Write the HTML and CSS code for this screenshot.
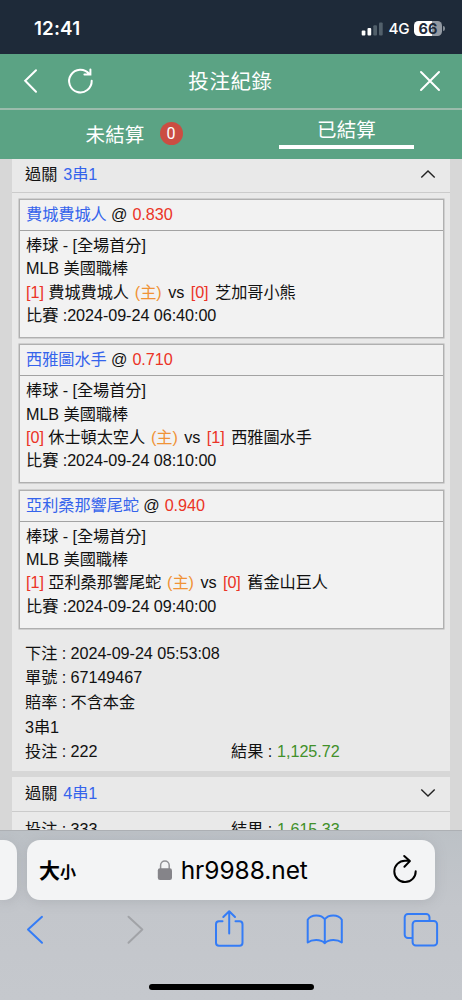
FILE: index.html
```html
<!DOCTYPE html>
<html lang="zh-Hant">
<head>
<meta charset="utf-8">
<title>投注紀錄</title>
<link rel="stylesheet" href="styles.css">
</head>
<body>
<div class="phone">
  <div class="status">
    <span class="clock">12:41</span>
    <div class="signals">
      <svg class="bars" width="23" height="14" viewBox="0 0 23 14"><g fill="#fff"><rect x="0.7" y="8.6" width="3.7" height="5" rx="1"/><rect x="6.5" y="6.1" width="3.7" height="7.5" rx="1"/></g><g fill="#52606b"><rect x="12.3" y="3.2" width="3.7" height="10.4" rx="1"/><rect x="18" y="0.5" width="3.7" height="13.1" rx="1"/></g></svg>
      <span class="net">4G</span>
      <span class="battery">66</span>
      <span class="nub"></span>
    </div>
  </div>
  <header class="titlebar">
    <div class="left">
      <svg width="16" height="26" viewBox="0 0 16 26"><path d="M14 2.2 3.2 12.8 14 23.7" class="wline"/></svg>
      <svg width="28" height="28" viewBox="0 0 28 28"><path d="M25.7 13.8A11.3 11.3 0 1 1 23.2 7M24.4 2.5V7.5H18.4" class="wline"/></svg>
    </div>
    <h1>投注紀錄</h1>
    <svg class="close" width="24" height="24" viewBox="0 0 24 24"><path d="M3 3 21 21M21 3 3 21" class="wline"/></svg>
  </header>
  <nav class="tabs">
    <div class="tab">未結算<span class="count">0</span></div>
    <div class="tab active"><span>已結算</span></div>
  </nav>
  <main class="content">
    <section class="panel first">
      <div class="fold">過關 <b>3串1</b><svg width="18" height="10" viewBox="0 0 18 10"><path d="M2.3 8.4 9 1.9 15.7 8.4"/></svg></div>
      <div class="cards">
        <article class="card">
          <div class="pick"><b>費城費城人</b> @ <i>0.830</i></div>
          <div class="match"><p>棒球 - [全場首分]</p><p>MLB 美國職棒</p><p><i>[1]</i> 費城費城人 <em>(主)</em><span class="vs">vs</span><i>[0]</i><span class="away">芝加哥小熊</span></p><p>比賽 :2024-09-24 06:40:00</p></div>
        </article>
        <article class="card">
          <div class="pick"><b>西雅圖水手</b> @ <i>0.710</i></div>
          <div class="match"><p>棒球 - [全場首分]</p><p>MLB 美國職棒</p><p><i>[0]</i> 休士頓太空人 <em>(主)</em><span class="vs">vs</span><i>[1]</i><span class="away">西雅圖水手</span></p><p>比賽 :2024-09-24 08:10:00</p></div>
        </article>
        <article class="card">
          <div class="pick"><b>亞利桑那響尾蛇</b> @ <i>0.940</i></div>
          <div class="match"><p>棒球 - [全場首分]</p><p>MLB 美國職棒</p><p><i>[1]</i> 亞利桑那響尾蛇 <em>(主)</em><span class="vs">vs</span><i>[0]</i><span class="away">舊金山巨人</span></p><p>比賽 :2024-09-24 09:40:00</p></div>
        </article>
      </div>
      <div class="info">
        <p>下注 : 2024-09-24 05:53:08</p>
        <p>單號 : 67149467</p>
        <p>賠率 : 不含本金</p>
        <p>3串1</p>
        <div class="sum"><p>投注 : 222</p><p>結果 : <u>1,125.72</u></p></div>
      </div>
    </section>
    <section class="panel second">
      <div class="fold">過關 <b>4串1</b><svg width="18" height="10" viewBox="0 0 18 10"><path d="M2.3 1.6 9 8.1 15.7 1.6"/></svg></div>
      <div class="info"><div class="sum"><p>投注 : 333</p><p>結果 : <u>1,615.33</u></p></div></div>
    </section>
  </main>
  <footer class="browser">
    <div class="row">
      <div class="prev"></div>
      <div class="address">
        <span class="size">大<small>小</small></span>
        <div class="host"><svg width="16" height="22" viewBox="0 0 16 22"><path d="M3.6 10V6.2a4.3 4.3 0 0 1 8.6 0V10" fill="none" stroke="#929296" stroke-width="1.5"/><rect x="0.8" y="9.3" width="14.2" height="11.7" rx="2.2" fill="#858489"/></svg><span>hr9988.net</span></div>
        <svg class="reload" width="26" height="32" viewBox="0 0 26 32"><path d="M23.7 17.2A10.7 10.7 0 1 1 13 6.7H17.6M12.2 2 17.9 7.1 12.4 12.8" fill="none" stroke="#000" stroke-width="2" stroke-linecap="round" stroke-linejoin="round"/></svg>
      </div>
    </div>
    <div class="tools">
      <svg width="462" height="50" viewBox="0 0 462 50">
        <g fill="none" stroke="#347cf6" stroke-width="2" stroke-linecap="round" stroke-linejoin="round">
          <path d="M42 12.8 28 25.5 42 38.8"/>
          <path d="M128.5 12.8 142.3 25.5 128.5 38.8" stroke="#a1a3a7"/>
          <path d="M222.5 17.3H219a3 3 0 0 0-3 3V38.7a3 3 0 0 0 3 3H239.5a3 3 0 0 0 3-3V20.3a3 3 0 0 0-3-3H235.5M229.2 29.5V7.5M223.3 13 229.2 7.2 235 13"/>
          <path d="M324.8 39.2V15.3C321.3 10.3 311.2 10 307.7 15.7V38.5C311.5 35.5 320.5 34.6 324.8 39.2 329 34.6 338 35.5 341.8 38.5V15.7C338.3 10 328.3 10.3 324.8 15.3"/>
          <path d="M412 34H408a3.3 3.3 0 0 1-3.3-3.3V13.3A3.3 3.3 0 0 1 408 10H426.2a3.3 3.3 0 0 1 3.3 3.3V17"/>
          <rect x="412.6" y="17.1" width="24.5" height="24.5" rx="3.3"/>
        </g>
      </svg>
    </div>
    <div class="home"></div>
  </footer>
</div>
</body>
</html>
```
FILE: styles.css
```css
* { box-sizing: border-box; }
body { margin: 0; font-family: "Liberation Sans", "Noto Sans CJK TC", sans-serif; color: #111; }
p, h1 { margin: 0; }
b, i, em, u { font-weight: normal; font-style: normal; text-decoration: none; }
b { color: #3564ec; }
i { color: #eb3427; }
em { color: #f09336; margin-left: 1.5px; }
u { color: #42902a; margin-left: 0.5px; }
svg { display: block; flex: none; }
.phone { width: 462px; height: 1000px; overflow: hidden; display: flex; flex-direction: column; background: #d7d7d7; }

.status { flex: none; height: 54px; background: #1e2a39; color: #fff; display: flex; justify-content: space-between; align-items: center; padding: 3px 18px 0 34px; font-family: Inter, sans-serif; }
.clock { font-size: 18.8px; font-weight: 600; letter-spacing: 0.15px; }
.signals { display: flex; align-items: center; }
.net { font-size: 15.2px; font-weight: 500; margin-left: 5px; width: 25.5px; letter-spacing: -0.3px; }
.battery { width: 28px; height: 15px; border-radius: 4.5px; background: linear-gradient(90deg, #fff 66%, #9299a2 66%); color: #1e2a39; font-size: 14.5px; line-height: 15px; font-weight: 700; text-align: center; }
.nub { width: 2px; height: 5px; background: #858d96; border-radius: 0 2px 2px 0; margin-left: 1px; margin-right: -1px; }

.titlebar { flex: none; height: 56px; background: #5ba384; border-bottom: 2px solid #9bbcac; display: grid; grid-template-columns: 1fr auto 1fr; align-items: center; padding: 0 20px 0 22px; color: #fff; }
.left { display: flex; align-items: center; gap: 28px; }
.titlebar h1 { font-size: 20.5px; font-weight: 400; letter-spacing: 0.6px; line-height: 30px; margin-left: -3px; padding-top: 1px; }
.close { justify-self: end; }
.wline { fill: none; stroke: #fff; stroke-width: 2; stroke-linecap: round; stroke-linejoin: miter; }
.tabs { flex: none; height: 49px; background: #5ba384; color: #fff; display: grid; grid-template-columns: 1fr 1fr; font-size: 19.5px; }
.tab { display: flex; justify-content: center; align-items: center; padding: 0 0 2px 37px; letter-spacing: 0.2px; }
.count { width: 23px; height: 23px; border-radius: 50%; background: #cb4d42; font-family: Roboto, sans-serif; font-size: 16px; line-height: 23px; text-align: center; margin-left: 15px; }
.tab.active { padding: 5px 0 0; align-items: flex-start; }
.active span { width: 134.5px; height: 34px; border-bottom: 4px solid #fff; line-height: 30px; text-align: center; }

.content { flex: none; height: 671px; overflow: hidden; padding: 0 12px; font-size: 16.2px; letter-spacing: -0.06px; }
.panel { background: #e9e9e9; }
.fold { height: 35.5px; line-height: 33px; border-bottom: 1px solid #cbcbcb; padding: 0 13px 1px; display: flex; align-items: center; white-space: pre; }
.fold b { margin-left: 1.5px; }
.fold svg { margin-left: auto; fill: none; stroke: #222; stroke-width: 1.4; }
.first .fold { height: 33.5px; line-height: 30px; padding-bottom: 3px; }
.first { height: 611.5px; }
.second { margin-top: 6px; height: 80px; }
.cards { padding: 6.3px 6.5px 0; display: flex; flex-direction: column; gap: 6.1px; }
.card { height: 139.3px; background: #f2f2f2; border: 1.5px solid #b0b0b0; box-shadow: 0 0 0 0.5px #b5b5b5; }
.pick { height: 31px; line-height: 29px; border-bottom: 1px solid #a3a3a3; padding-left: 6.5px; white-space: pre; }
.pick i { margin-left: 0.5px; }
.match { padding: 3.2px 0 0 6.5px; }
.match p { height: 23.3px; line-height: 23.3px; white-space: pre; }
.vs { margin: 0 6.5px 0 6.5px; }
.away { margin-left: 6.5px; }
.info { padding: 11.9px 13px 0; }
.info p { height: 24.6px; line-height: 24.6px; white-space: pre; }
.second .info { padding-top: 5px; }
.sum { display: grid; grid-template-columns: 206px 1fr; }

.browser { flex: none; height: 170px; background: linear-gradient(#bcc1c6, #c3c6cb 45%, #c5c8cd); border-top: 1px solid #adb0b4; display: flex; flex-direction: column; align-items: center; }
.row { width: 100%; height: 69px; padding-top: 9px; display: flex; gap: 10px; }
.prev { width: 17px; height: 60px; background: #f3f4f5; border-radius: 0 13px 13px 0; box-shadow: 0 2px 12px #7f858c44; }
.address { width: 408px; height: 60px; background: #f3f4f5; border-radius: 13px; box-shadow: 0 2px 12px #7f858c44; display: grid; grid-template-columns: 1fr auto 1fr; align-items: center; padding: 0 17px 0 12px; color: #000; }
.size { font-size: 21px; font-weight: 700; line-height: 30px; padding-top: 3px; }
.size small { font-size: 16px; }
.host { display: flex; align-items: center; gap: 8px; font-family: Inter, sans-serif; font-size: 24.5px; letter-spacing: -0.05px; padding-left: 7.5px; }
.reload { justify-self: end; }
.tools { height: 78px; padding-top: 4px; }
.home { width: 165px; height: 6px; border-radius: 3px; background: #000; margin-top: 6px; }
```
